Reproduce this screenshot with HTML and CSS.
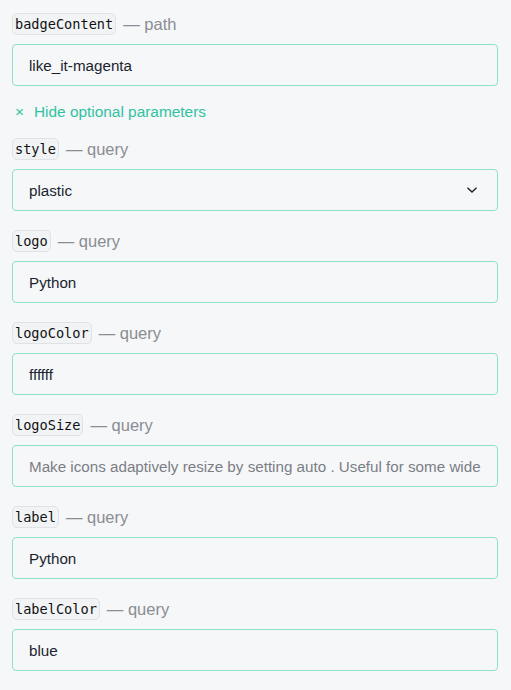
FILE: index.html
```html
<!DOCTYPE html>
<html lang="en">
<head>
  <meta charset="UTF-8">
  <title>Badge Parameters</title>
  <link rel="stylesheet" href="styles.css">
</head>
<body>

  <div class="field">
    <div class="field-label"><code>badgeContent</code> <span class="kind">— path</span></div>
    <input type="text" class="field-input" value="like_it-magenta">
  </div>

  <div class="toggle"><span class="toggle-x">×</span> Hide optional parameters</div>

  <div class="params">
    <div class="field">
      <div class="field-label"><code>style</code> <span class="kind">— query</span></div>
      <div class="field-input select">
        <span>plastic</span>
        <svg width="12" height="8" viewBox="0 0 12 8"><path d="M1.5 1.8 L6 6 L10.5 1.8" fill="none" stroke="#222" stroke-width="1.4"/></svg>
      </div>
    </div>

    <div class="field">
      <div class="field-label"><code>logo</code> <span class="kind">— query</span></div>
      <input type="text" class="field-input" value="Python">
    </div>

    <div class="field">
      <div class="field-label"><code>logoColor</code> <span class="kind">— query</span></div>
      <input type="text" class="field-input" value="ffffff">
    </div>

    <div class="field">
      <div class="field-label"><code>logoSize</code> <span class="kind">— query</span></div>
      <input type="text" class="field-input" placeholder="Make icons adaptively resize by setting auto . Useful for some wide">
    </div>

    <div class="field">
      <div class="field-label"><code>label</code> <span class="kind">— query</span></div>
      <input type="text" class="field-input" value="Python">
    </div>

    <div class="field">
      <div class="field-label"><code>labelColor</code> <span class="kind">— query</span></div>
      <input type="text" class="field-input" value="blue">
    </div>
  </div>

</body>
</html>
```

FILE: styles.css
```css
body {
  margin: 0;
  padding: 13px 13px 20px 12px;
  background: #f6f7f9;
  font-family: "Liberation Sans", Arial, sans-serif;
  font-size: 15px;
  color: #1b1f2e;
}
.field {
  display: flex;
  flex-direction: column;
  gap: 9px;
}
.field-label {
  display: flex;
  align-items: center;
  gap: 7px;
  height: 22px;
}
code {
  font-family: "DejaVu Sans Mono", monospace;
  font-size: 13.6px;
  color: #111;
  background: #f2f3f5;
  border: 1px solid #e0e2e6;
  border-radius: 5px;
  padding: 2px 2px;
  line-height: 16px;
}
.kind {
  color: #8a8d93;
  font-size: 16.5px;
}
.field-input {
  box-sizing: border-box;
  width: 100%;
  height: 42px;
  padding: 0 16px;
  background: #f6f7f9;
  border: 1px solid #8fe0c6;
  border-radius: 4px;
  font-family: inherit;
  font-size: 15.2px;
  color: #1b1f2e;
  outline: none;
}
.field-input::placeholder {
  color: #7b7e85;
}
.select {
  display: flex;
  align-items: center;
  justify-content: space-between;
  padding-right: 19px;
}
.toggle {
  height: 52px;
  display: flex;
  align-items: center;
  color: #2fc3a0;
  font-size: 15.4px;
  padding-left: 3px;
}
.toggle-x {
  margin-right: 10px;
}
.params {
  display: flex;
  flex-direction: column;
  gap: 19px;
}
```
